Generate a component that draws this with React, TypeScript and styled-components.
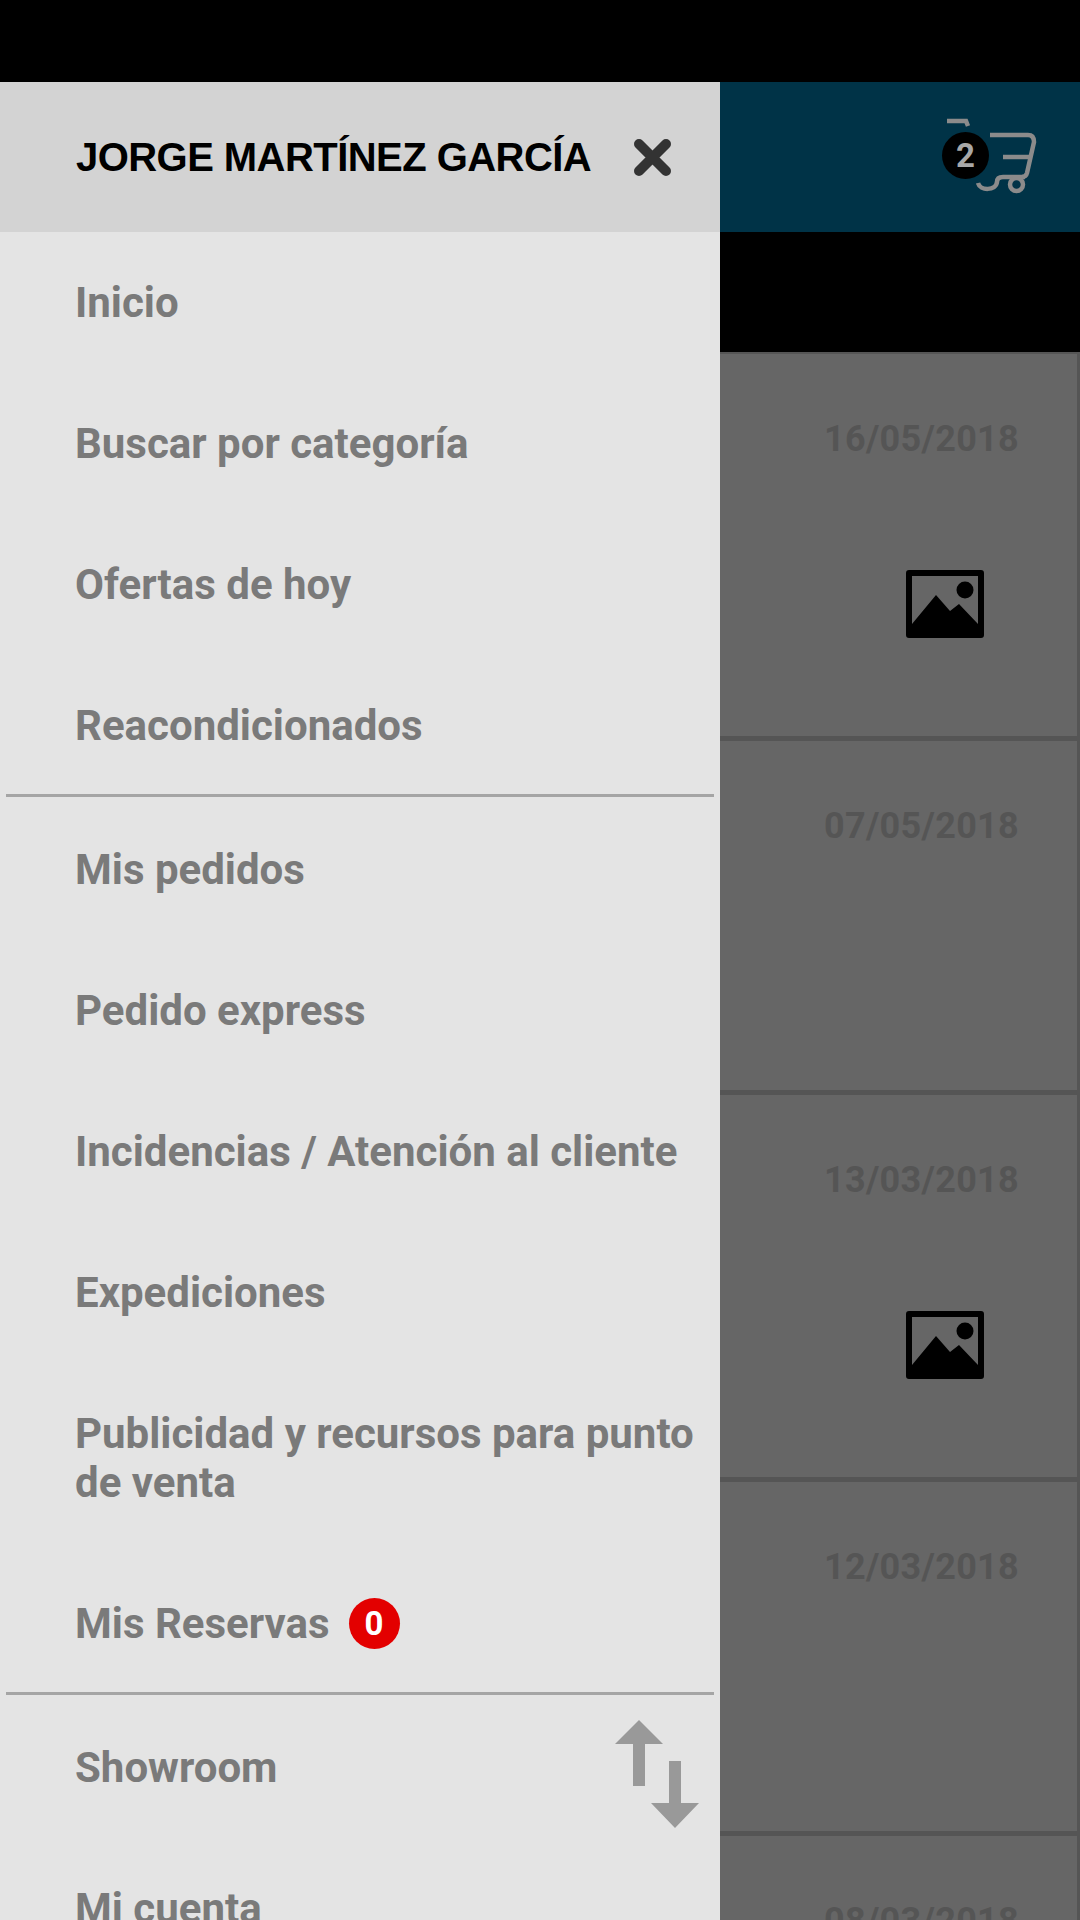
import { FC } from "react";
import styled, { createGlobalStyle } from "styled-components";

const GlobalStyle = createGlobalStyle`
  html, body {
    margin: 0;
    padding: 0;
    background: #000;
  }
  * {
    box-sizing: border-box;
  }
`;

const Page = styled.div`
  position: relative;
  width: 1080px;
  height: 1920px;
  overflow: hidden;
  background: #000;
  font-family: Roboto, "Noto Sans", sans-serif;
`;

const StatusBar = styled.div`
  height: 82px;
  background: #000;
`;

const AppBar = styled.header`
  height: 150px;
  background: #003347;
  display: flex;
  justify-content: flex-end;
  align-items: center;
  padding-right: 40px;
`;

const CartWrap = styled.div`
  position: relative;
  width: 100px;
  height: 80px;
`;

const CartCount = styled.span`
  position: absolute;
  left: 2px;
  top: 15px;
  width: 47px;
  height: 47px;
  border-radius: 50%;
  background: #000;
  color: #a8a8a8;
  font-size: 33px;
  font-weight: 700;
  display: flex;
  align-items: center;
  justify-content: center;
`;

const Band = styled.div`
  height: 120px;
  background: #000;
`;

const OrderList = styled.section`
  border-top: 2px solid #555;
`;

const OrderCard = styled.article<{ $tall?: boolean }>`
  height: ${(p) => (p.$tall ? 387 : 354)}px;
  background: #666;
  border-right: 3px solid #555;
  border-bottom: 5px solid #555;
  padding: 64px 58px 0 0;
  display: flex;
  flex-direction: column;
  align-items: flex-end;
`;

const OrderDate = styled.div`
  font-size: 36px;
  line-height: 42px;
  font-weight: 700;
  letter-spacing: 0.3px;
  color: #555;
`;

const Thumb = styled.svg`
  margin-top: 110px;
  margin-right: 35px;
  width: 78px;
  height: 68px;
`;

const Drawer = styled.nav`
  position: absolute;
  left: 0;
  top: 82px;
  width: 720px;
  height: 1838px;
  background: #e4e4e4;
  overflow: hidden;
`;

const DrawerHead = styled.div`
  height: 150px;
  background: #d3d3d3;
  display: flex;
  align-items: center;
  justify-content: space-between;
  padding: 0 49px 0 76px;
`;

const UserName = styled.div`
  font-family: "Liberation Sans", Arial, sans-serif;
  font-size: 40px;
  letter-spacing: -0.55px;
  font-weight: 700;
  color: #000;
  white-space: nowrap;
`;

const CloseIcon = styled.svg`
  width: 37px;
  height: 37px;
`;

const MenuItem = styled.div`
  padding: 46px 8px 46px 75px;
  display: flex;
  align-items: center;
  gap: 19px;
  font-size: 42px;
  line-height: 49px;
  font-weight: 700;
  color: #7a7a7a;
`;

const Divider = styled.hr`
  margin: -2px 6px 2px 6px;
  border: 0;
  height: 3px;
  background: #a5a5a5;
`;

const RedBadge = styled.span`
  width: 51px;
  height: 51px;
  margin: -1px 0;
  border-radius: 50%;
  background: #e30000;
  color: #fff;
  font-size: 33px;
  font-weight: 700;
  display: flex;
  align-items: center;
  justify-content: center;
`;

const SwapIcon = styled.svg`
  position: absolute;
  left: 615px;
  top: 1638px;
  width: 84px;
  height: 108px;
`;

const ImageGlyph: FC = () => (
  <Thumb viewBox="0 0 78 68">
    <path
      fillRule="evenodd"
      d="M3 0h72a3 3 0 0 1 3 3v62a3 3 0 0 1-3 3H3a3 3 0 0 1-3-3V3a3 3 0 0 1 3-3zM6 6v48l24-29 14 16 9-7 19 20V6z"
      fill="#000"
    />
    <circle cx="59" cy="20" r="8.5" fill="#000" />
  </Thumb>
);

const CartIcon: FC = () => (
  <svg viewBox="0 0 100 80" width="100" height="80" fill="none" stroke="#8b8b8b" strokeWidth="4.5">
    <path d="M7 4h19l2 5" />
    <path d="M50 18h38q6 0 6 7l-7 31q-1 4-5 4" />
    <path d="M63 40h27" />
    <path d="M85 60H63q-6 0-6 5c-1 9-17 9-19 1" />
    <circle cx="76.5" cy="67.5" r="6.5" />
  </svg>
);

const orders = [
  { date: "16/05/2018", tall: true },
  { date: "07/05/2018" },
  { date: "13/03/2018", tall: true },
  { date: "12/03/2018" },
  { date: "08/03/2018" },
];

const firstGroup = ["Inicio", "Buscar por categoría", "Ofertas de hoy", "Reacondicionados"];
const secondGroup = [
  "Mis pedidos",
  "Pedido express",
  "Incidencias / Atención al cliente",
  "Expediciones",
  "Publicidad y recursos para punto de venta",
];

export default function App() {
  return (
    <>
      <GlobalStyle />
      <Page>
        <StatusBar />
        <AppBar>
          <CartWrap>
            <CartIcon />
            <CartCount>2</CartCount>
          </CartWrap>
        </AppBar>
        <Band />
        <OrderList>
          {orders.map((o) => (
            <OrderCard key={o.date} $tall={o.tall}>
              <OrderDate>{o.date}</OrderDate>
              {o.tall && <ImageGlyph />}
            </OrderCard>
          ))}
        </OrderList>

        <Drawer>
          <DrawerHead>
            <UserName>JORGE MARTÍNEZ GARCÍA</UserName>
            <CloseIcon viewBox="0 0 37 37">
              <path d="M5 5l27 27M32 5L5 32" stroke="#333" strokeWidth="10" strokeLinecap="round" />
            </CloseIcon>
          </DrawerHead>
          {firstGroup.map((t) => (
            <MenuItem key={t}>{t}</MenuItem>
          ))}
          <Divider />
          {secondGroup.map((t) => (
            <MenuItem key={t}>{t}</MenuItem>
          ))}
          <MenuItem>
            Mis Reservas
            <RedBadge>0</RedBadge>
          </MenuItem>
          <Divider />
          <MenuItem>Showroom</MenuItem>
          <MenuItem>Mi cuenta</MenuItem>
          <SwapIcon viewBox="0 0 84 108" fill="#999">
            <path d="M24 0l24 24H30v42H18V24H0z" />
            <path d="M54 41h12v42h18l-24 25-24-25h18z" />
          </SwapIcon>
        </Drawer>
      </Page>
    </>
  );
}
